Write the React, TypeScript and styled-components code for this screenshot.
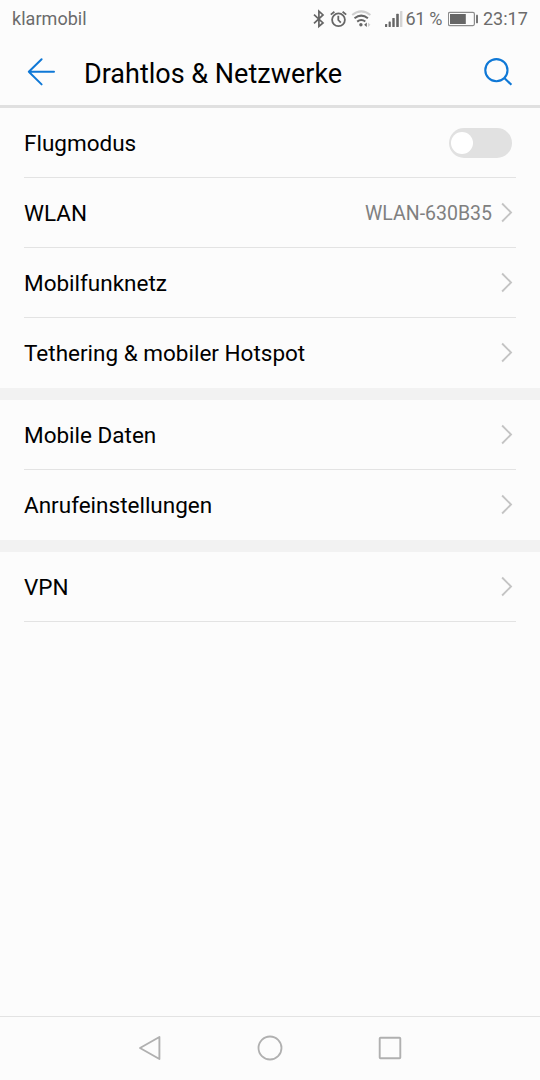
import React from 'react';
import styled, { createGlobalStyle } from 'styled-components';

const GlobalStyle = createGlobalStyle`
  * { box-sizing: border-box; }
  body { margin: 0; background: #fcfcfc; font-family: Roboto, sans-serif; }
`;

const Screen = styled.div`
  width: 540px;
  height: 1080px;
  display: flex;
  flex-direction: column;
  background: #fcfcfc;
  overflow: hidden;
`;

const StatusBar = styled.div`
  height: 37px;
  flex: none;
  display: flex;
  align-items: center;
  justify-content: space-between;
  padding: 1px 12px 0;
  font-size: 18px;
  line-height: 36px;
  color: #6b6b6b;
`;

const Carrier = styled.span`
  letter-spacing: 0.04px;
`;

const StatusGroup = styled.div`
  display: flex;
  align-items: center;
  height: 36px;
`;

const StatusSvg = styled.svg`
  display: block;
  flex: none;
`;

const Percent = styled.span`
  width: 42px;
  white-space: nowrap;
  letter-spacing: -0.3px;
`;

const Clock = styled.span`
  width: 45px;
  white-space: nowrap;
`;

const Header = styled.header`
  height: 71px;
  flex: none;
  display: flex;
  align-items: center;
  padding: 0 24px;
  border-bottom: 3px solid #e0e0e0;
`;

const Title = styled.h1`
  flex: 1;
  margin: 6px 0 0 24px;
  font-size: 27px;
  line-height: 32px;
  font-weight: 400;
  color: #000;
`;

const IconButton = styled.button`
  width: 36px;
  height: 36px;
  padding: 0;
  border: 0;
  background: none;
  margin-top: 2px;
  svg { display: block; }
`;

const Group = styled.section`
  flex: none;
  & + & { border-top: 12px solid #f2f2f2; }
`;

const Row = styled.div<{ $line: boolean }>`
  height: 70px;
  margin: 0 24px;
  display: flex;
  align-items: center;
  border-bottom: 1px solid ${(p) => (p.$line ? '#e3e3e3' : 'transparent')};
`;

const Label = styled.span`
  flex: 1;
  padding-top: 0;
  font-size: 22.5px;
  line-height: 30px;
  color: #000;
`;

const Value = styled.span`
  padding-top: 2px;
  margin-right: 8px;
  font-size: 19.5px;
  line-height: 28px;
  color: #808080;
`;

const Toggle = styled.span`
  width: 63px;
  height: 30px;
  margin-right: 4.5px;
  padding: 0 2.5px;
  border-radius: 15px;
  background: #e1e1e1;
  display: flex;
  align-items: center;
`;

const Knob = styled.span`
  width: 22px;
  height: 22px;
  border-radius: 50%;
  background: #fff;
`;

const Spacer = styled.div`
  flex: 1;
`;

const NavBar = styled.nav`
  height: 64px;
  flex: none;
  border-top: 1px solid #e3e3e3;
  padding: 0 90px 1px;
  display: grid;
  grid-template-columns: repeat(3, 120px);
  place-items: center;
  svg { display: block; }
`;

const Chevron = () => (
  <svg width="16" height="22" viewBox="0 0 16 22" fill="none" stroke="#c4c4c4" strokeWidth="1.9">
    <path d="M2.1 1.5L11 10.5L2.1 19.5" />
  </svg>
);

type Item = { label: string; value?: string; toggle?: boolean; last?: boolean };

const groups: Item[][] = [
  [
    { label: 'Flugmodus', toggle: true },
    { label: 'WLAN', value: 'WLAN-630B35' },
    { label: 'Mobilfunknetz' },
    { label: 'Tethering & mobiler Hotspot', last: true },
  ],
  [{ label: 'Mobile Daten' }, { label: 'Anrufeinstellungen', last: true }],
  [{ label: 'VPN' }],
];

const StatusIcons = () => (
  <StatusSvg width="94" height="36" viewBox="312 0 94 36" fill="none" stroke="#666" strokeWidth="1.7">
    <path d="M314 13.7L323 22L318.9 25.5V10.2L323 13.9L314 22.4" />
    <circle cx="338.5" cy="18.8" r="6.4" strokeWidth="1.8" />
    <path d="M338.3 14.8V19L340.8 21.6M330.8 13.6L334.4 10.8M342.6 10.8L346.2 13.6" strokeWidth="1.8" />
    <path d="M352.2 14Q361.2 6.8 370.4 14" stroke="#cfcfcf" strokeWidth="2" />
    <path d="M354.5 17.2Q361.3 12 367.9 17.2M357.2 20.6Q361.3 17.3 365.3 20.6" strokeWidth="2" />
    <circle cx="360.9" cy="23.8" r="1.7" fill="#666" stroke="none" />
    <path d="M364.1 23.8L366.8 21.6V26Z" fill="#666" stroke="none" />
    <path d="M368 21.6L370.4 23.8L368 26Z" fill="#cfcfcf" stroke="none" />
    <g stroke="none" fill="#666">
      <rect x="385" y="23" width="2.2" height="3" rx=".6" />
      <rect x="388.6" y="20.4" width="2.2" height="5.6" rx=".6" />
      <rect x="392.3" y="17" width="2.4" height="9" rx=".6" />
      <rect x="396.2" y="12.7" width="2.6" height="13.3" rx=".6" />
      <rect x="400" y="10" width="2.4" height="16" rx=".6" fill="#d4d4d4" />
    </g>
  </StatusSvg>
);

const Battery = () => (
  <StatusSvg width="35.5" height="36" viewBox="448 0 35.5 36" fill="none">
    <rect x="448.4" y="11.4" width="26" height="13.2" rx="1.5" stroke="#8c8c8c" strokeWidth="1.2" />
    <rect x="450" y="13" width="15.8" height="10" fill="#666" />
    <rect x="476" y="13.8" width="2" height="8.4" rx=".4" fill="#777" />
  </StatusSvg>
);

export default function App() {
  return (
    <>
      <GlobalStyle />
      <Screen>
        <StatusBar>
          <Carrier>klarmobil</Carrier>
          <StatusGroup>
            <StatusIcons />
            <Percent>61 %</Percent>
            <Battery />
            <Clock>23:17</Clock>
          </StatusGroup>
        </StatusBar>
        <Header>
          <IconButton aria-label="Zurück">
            <svg width="36" height="36" viewBox="24 54 36 36" fill="none" stroke="#0f78d6" strokeWidth="2" strokeLinecap="round" strokeLinejoin="round">
              <path d="M54 71.8H28.8M41.6 59.2L28.8 71.8L41.6 84.4" />
            </svg>
          </IconButton>
          <Title>Drahtlos &amp; Netzwerke</Title>
          <IconButton aria-label="Suchen">
            <svg width="36" height="36" viewBox="480 54 36 36" fill="none" stroke="#0f78d6" strokeWidth="2.1">
              <circle cx="496.4" cy="70.2" r="11.1" />
              <path d="M504.3 78L511.4 84.8" />
            </svg>
          </IconButton>
        </Header>
        {groups.map((items, i) => (
          <Group key={i}>
            {items.map((item) => (
              <Row key={item.label} $line={!item.last}>
                <Label>{item.label}</Label>
                {item.value && <Value>{item.value}</Value>}
                {item.toggle ? (
                  <Toggle role="switch" aria-checked={false}>
                    <Knob />
                  </Toggle>
                ) : (
                  <Chevron />
                )}
              </Row>
            ))}
          </Group>
        ))}
        <Spacer />
        <NavBar>
          <svg width="36" height="36" viewBox="132 1030 36 36" fill="none" stroke="#b0b0b0" strokeWidth="1.9" strokeLinejoin="round">
            <path d="M140 1048L159.4 1037V1059Z" />
          </svg>
          <svg width="36" height="36" viewBox="252 1030 36 36" fill="none" stroke="#b0b0b0" strokeWidth="1.8">
            <circle cx="270" cy="1048" r="11.5" />
          </svg>
          <svg width="36" height="36" viewBox="372 1030 36 36" fill="none" stroke="#b0b0b0" strokeWidth="1.9">
            <rect x="379.7" y="1037.7" width="20.6" height="20.6" rx=".8" />
          </svg>
        </NavBar>
      </Screen>
    </>
  );
}
